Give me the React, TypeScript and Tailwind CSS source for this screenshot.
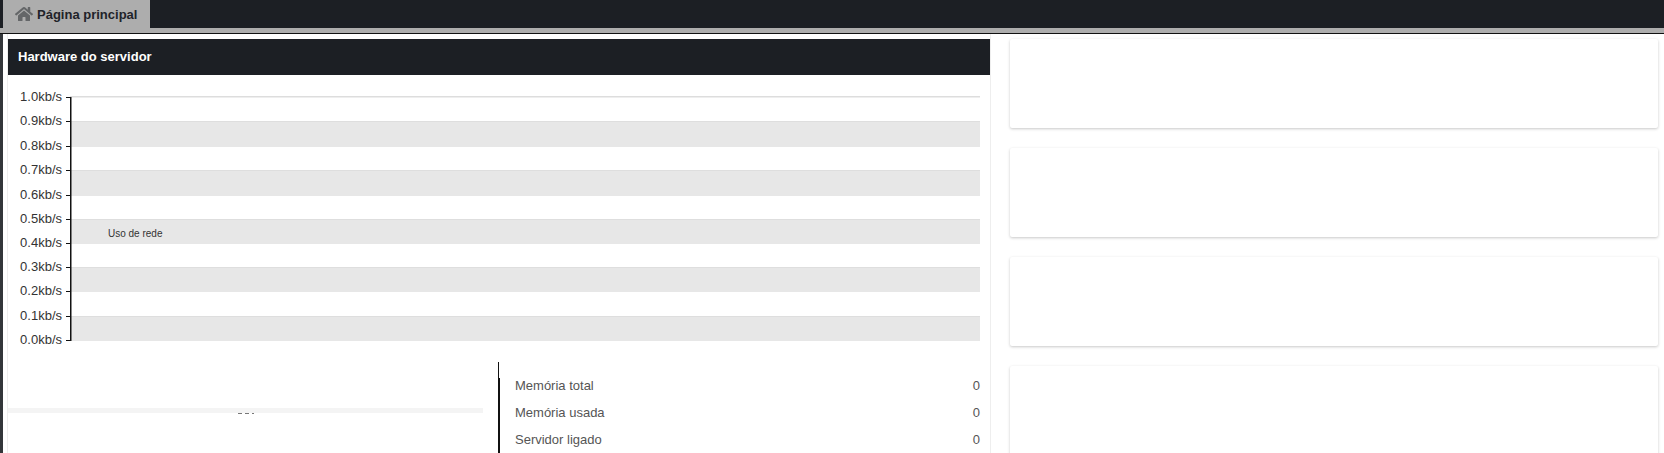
import React from 'react';
import { FaHome } from 'react-icons/fa';

const ticks = ['1.0', '0.9', '0.8', '0.7', '0.6', '0.5', '0.4', '0.3', '0.2', '0.1', '0.0'];
const tickY = [97, 121, 146, 170, 195, 219, 243, 267, 291, 316, 340];
const stats = ['Memória total', 'Memória usada', 'Servidor ligado'];

const NetworkChart = () => (
  <svg width="982" height="287" viewBox="0 75 982 287" className="block" style={{ fontFamily: '"Liberation Sans", sans-serif' }}>
    <rect x="62" y="96" width="910" height="1.5" fill="#dddddd" />
    {[1, 3, 5, 7, 9].map((i) => (
      <g key={i}>
        <rect x="63" y={tickY[i]} width="909" height={tickY[i + 1] - tickY[i] + 1} fill="#e7e7e7" />
        <rect x="63" y={tickY[i]} width="909" height="1" fill="#dedede" />
      </g>
    ))}
    {ticks.map((t, i) => (
      <g key={t}>
        <rect x="58" y={tickY[i]} width="4" height="1" fill="#111111" />
        <text x="54" y={tickY[i] + 4} textAnchor="end" fontSize="13" fill="#333333">
          {t}kb/s
        </text>
      </g>
    ))}
    <rect x="62" y="97" width="1.5" height="244" fill="#111111" />
    <text x="100" y="237" fontSize="10" fill="#333333">Uso de rede</text>
  </svg>
);

const Card = ({ className }: { className: string }) => (
  <div className={`bg-white rounded-[2px] shadow-[0_1px_3px_rgba(0,0,0,0.22)] ${className}`} />
);

export default function App() {
  return (
    <div className="h-[453px] w-[1664px] overflow-hidden bg-white flex flex-col font-['Liberation_Sans',sans-serif]">
      <div className="h-[28px] shrink-0 bg-[#1c1f24] pl-[3px] flex">
        <div className="w-[147px] bg-[#adadad] flex items-center pl-[12px] gap-[4px]">
          <FaHome className="text-[#646668] w-[18px] h-[16px]" />
          <span className="text-[13px] font-bold text-[#1f2329] leading-none">Página principal</span>
        </div>
      </div>
      <div className="h-[6px] shrink-0 bg-[#adadad] border-b border-[#111111]" />
      <div className="flex-1 flex min-h-0">
        <div className="w-[3px] bg-[#33363a] shrink-0" />
        <div className="w-[4px] shrink-0" />
        <div className="w-[984px] shrink-0 border-l border-r border-[#eeeeee] pt-[5px]">
          <div className="h-[36px] bg-[#1c1f24] flex items-center pl-[10px] text-[13px] font-bold text-white">
            Hardware do servidor
          </div>
          <NetworkChart />
          <div className="flex">
            <div className="w-[475px] shrink-0">
              <div className="mt-[46px] h-[5px] bg-[#f4f4f4]" />
              <div className="flex justify-center gap-[3px]">
                <span className="w-[4px] h-px bg-[#777777]" />
                <span className="w-[4px] h-px bg-[#777777]" />
                <span className="w-[2px] h-px bg-[#777777]" />
              </div>
            </div>
            <div className="ml-[15px] flex-1 relative border-l-2 border-[#111111] pl-[15px] pr-[10px] pt-[10px] text-[13px] text-[#555555]">
              <div className="absolute left-[-1px] top-0 w-px h-[16px] bg-white" />
              {stats.map((s) => (
                <div key={s} className="h-[27px] flex items-center justify-between">
                  <span>{s}</span>
                  <span>0</span>
                </div>
              ))}
            </div>
          </div>
        </div>
        <div className="flex-1 pl-[19px] pr-[6px] pt-[5px] flex flex-col gap-[20px]">
          <Card className="h-[89px] shrink-0" />
          <Card className="h-[89px] shrink-0" />
          <Card className="h-[89px] shrink-0" />
          <Card className="h-[200px] shrink-0" />
        </div>
      </div>
    </div>
  );
}
